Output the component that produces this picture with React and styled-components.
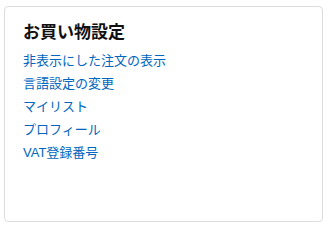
import React from 'react'
import styled, { createGlobalStyle } from 'styled-components'

const GlobalStyle = createGlobalStyle`
  html, body {
    margin: 0;
    padding: 0;
    background: #fff;
  }
  body {
    font-family: "Liberation Sans", Arial, "Noto Sans CJK JP", sans-serif;
    color: #111;
  }
`

const Page = styled.div`
  padding: 6px 9px 7px 4px;
`

const Card = styled.div`
  height: 216px;
  box-sizing: border-box;
  border: 1px solid #ddd;
  border-radius: 4px;
  padding: 14px 18px;
`

const Heading = styled.h2`
  margin: 0 0 6px;
  font-size: 17px;
  line-height: 24px;
  font-weight: 700;
  color: #111;
`

const List = styled.ul`
  list-style: none;
  margin: 0;
  padding: 0;
`

const Item = styled.li`
  font-size: 13px;
  line-height: 19px;
  margin-bottom: 4px;
`

const Link = styled.a`
  color: #0066c0;
  text-decoration: none;
`

const links = [
  '非表示にした注文の表示',
  '言語設定の変更',
  'マイリスト',
  'プロフィール',
  'VAT登録番号',
]

const App = () => {
  return (
    <>
      <GlobalStyle />
      <Page>
        <Card>
          <Heading>お買い物設定</Heading>
          <List>
            {links.map((text) => (
              <Item key={text}>
                <Link href="#">{text}</Link>
              </Item>
            ))}
          </List>
        </Card>
      </Page>
    </>
  )
}

export default App
